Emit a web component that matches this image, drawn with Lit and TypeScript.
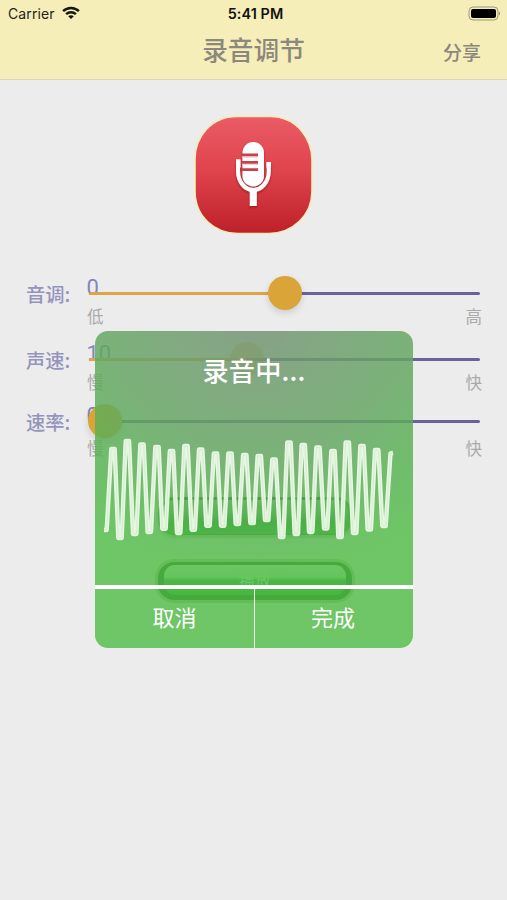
import { LitElement, html, svg, css } from "lit";
import { customElement, property } from "lit/decorators.js";

const WAVE: number[][] = [
  [104, 530], [106.7, 530],
  [113, 449], [120, 538], [127.4, 441], [134.7, 534], [142, 444.5], [149.3, 532], [157, 447],
  [164, 528.7], [171.5, 451], [178.7, 533], [186, 446], [193.3, 529.7], [200.7, 449.5],
  [208, 525.7], [215.5, 453.5], [222.7, 525.7], [230, 453.5], [237.3, 524], [244.8, 455],
  [252, 523], [259.3, 456], [266.7, 520], [274, 459.5], [281.7, 537], [289, 442.5],
  [296.3, 534], [303.3, 445], [310.7, 532], [318, 447.5], [325.7, 528.5], [333, 451],
  [340, 537], [347.3, 442.5], [354.7, 533], [362, 446], [369.3, 529.5], [376.7, 450],
  [384, 526], [390.5, 453.5], [393, 453],
];

function wavePath(): string {
  return WAVE.map(([x, y], i) => {
    if (i === 0) return `M${x} ${y}`;
    if (i === 1 || i >= WAVE.length - 2) return `L${x} ${y}`;
    return `L${x - 1.7} ${y}L${x + 1.7} ${y}`;
  }).join("");
}

@customElement("slider-row")
class SliderRow extends LitElement {
  @property() label = "";
  @property() value = "";
  @property() low = "";
  @property() high = "";
  @property({ type: Number }) knob = 0;
  @property({ type: Number }) fill = 0;

  static styles = css`
    :host { display: grid; grid-template-columns: 89px 391px; height: 66px; align-content: start; }
    .label { padding-left: 26px; font-size: 19.3px; line-height: 31px; height: 30px; box-sizing: border-box; color: #9494bd; font-weight: 500; white-space: nowrap; font-family: "Noto Sans CJK SC", sans-serif; }
    .slider { position: relative; height: 30px; }
    .value { position: absolute; left: -2.5px; top: -3px; font: 22px/24px Roboto, sans-serif; color: #8585b9; }
    .track { position: absolute; left: 0; right: 0; top: 13px; height: 3px; border-radius: 2px; background: #6a629f; }
    .fill { height: 100%; background: #dda548; border-radius: 2px; }
    .knob { position: absolute; top: -3px; width: 34px; height: 34px; border-radius: 50%; background: #dba439; box-shadow: 0 3px 7px #0002; opacity: var(--knob-opacity, 1); }
    .ends { grid-column: 2; display: flex; justify-content: space-between; margin: var(--ends-gap, -1px) -2px 0; font-size: 16.5px; line-height: 18px; color: #aaa; }
  `;

  render() {
    return html`
      <div class="label">${this.label}</div>
      <div class="slider">
        <div class="value">${this.value}</div>
        <div class="track"><div class="fill" style="width:${this.fill}px"></div></div>
        <div class="knob" style="left:${this.knob}px"></div>
      </div>
      <div class="ends"><span>${this.low}</span><span>${this.high}</span></div>
    `;
  }
}

@customElement("app-root")
class AppRoot extends LitElement {
  static styles = css`
    :host { display: block; position: relative; width: 507px; height: 900px; overflow: hidden; background: #ececec; font-family: "Liberation Sans", "Noto Sans CJK SC", sans-serif; }
    * { box-sizing: border-box; }
    header { height: 80px; background: #f5eeb9; border-bottom: 1px solid #d9d5b9; }
    .status { height: 27px; display: grid; grid-template-columns: 1fr auto 1fr; align-items: center; padding: 0 6px 0 8px; font: 14px/27px Inter, sans-serif; color: #24231b; }
    .carrier { display: flex; align-items: center; gap: 7px; letter-spacing: .1px; }
    .carrier svg { margin-top: -1px; }
    .time { font-weight: 600; font-size: 14.4px; letter-spacing: .1px; color: #111; padding-left: 2px; }
    .battery { justify-self: end; display: block; margin-top: -1px; }
    .nav { display: grid; grid-template-columns: 1fr auto 1fr; height: 48px; align-items: center; color: #8d877d; font-weight: 500; }
    .title { font-size: 25.7px; line-height: 48px; grid-column: 2; }
    .share { justify-self: end; padding: 1px 26px 0 0; font-size: 19px; }
    .mic { display: block; margin: 33px auto 0 191px; }
    .rows { margin-top: 42px; }
    .rows slider-row:nth-child(2) { height: 62px; --knob-opacity: .5; }
    .rows slider-row:nth-child(3) { --ends-gap: 3px; }
    .buttons { display: grid; justify-content: center; margin: 24px 0 0 3px; gap: 27px; }
    .pill { width: 194px; height: 38px; border-radius: 16px; text-align: center; font-size: 16px; line-height: 37px; }
    .flat { background: linear-gradient(#b4cdb4 0, #70b870 35%, #169021 62%, #20a52b 95%, #126012 100%); border-top: 3px dashed #0b450c; border-left: 4px solid #2d922f; border-right: 4px solid #2d922f; box-shadow: 0 3px 2px #b1bd94; }
    .play { background: #004a04; box-shadow: 0 0 0 3px #b1bd94; padding: 3px 6px 5px; }
    .shine { display: block; height: 30px; border-radius: 11px; line-height: 34px; color: #d2f3ce; background: linear-gradient(#e0f2e0 0, #b9dfba 40%, #1c9423 52%, #08a30c 100%); }
    .dialog { position: absolute; left: 95px; top: 331px; width: 318px; height: 317px; border-radius: 13px; overflow: hidden; color: #fff; display: flex; flex-direction: column; }
    .tint { position: absolute; inset: 0; opacity: .83; background: radial-gradient(ellipse 290px 255px at 51% -5%, #748f73 0, #6d9b6c 25%, #64a562 52%, #57b351 78%, #54be4a 100%); }
    .heading, .wave, .actions { position: relative; }
    .heading { height: 84px; text-align: center; font: 500 26.2px/78px "Noto Sans CJK SC", sans-serif; letter-spacing: .2px; }
    .wave { display: block; height: 170px; width: 318px; }
    .actions { display: grid; grid-template-columns: 160px 158px; height: 63px; border-top: 4px solid #fff; }
    .actions div { text-align: center; font-size: 22px; line-height: 60px; }
    .actions div:first-child { border-right: 1.5px solid #f1f9ef; }
    .actions div:last-child { padding-right: 2px; }
  `;

  render() {
    return html`
      <header>
        <div class="status">
          <div class="carrier"><span>Carrier</span>
            <svg width="18" height="14" viewBox="0 0 18 14" fill="none" stroke="#171711" stroke-width="2.5">
              <path d="M1.1 5.1C5.5 .8 12.5.8 16.9 5.1M4.1 8.2c2.8-2.6 7-2.6 9.8 0"/>
              <path d="M9 13 6.2 10.3c1.6-1.4 4-1.4 5.6 0Z" fill="#171711" stroke="none"/>
            </svg>
          </div>
          <div class="time">5:41 PM</div>
          <svg class="battery" width="33" height="15" viewBox="0 0 33 15">
            <rect x="1" y="1" width="29" height="13" rx="4" fill="none" stroke="#9c9979"/>
            <rect x="3" y="3" width="25" height="9" rx="2" fill="#000"/>
            <path d="M31 5.5q2 2 0 4Z" fill="#858269"/>
          </svg>
        </div>
        <div class="nav"><div class="title">录音调节</div><div class="share">分享</div></div>
      </header>

      <svg class="mic" width="125" height="124" viewBox="191 113 125 124">
        <defs>
          <linearGradient id="red" x1="0" y1="0" x2="0" y2="1">
            <stop offset="0" stop-color="#ea5c66"/><stop offset=".45" stop-color="#e0444d"/><stop offset="1" stop-color="#bd2029"/>
          </linearGradient>
          <filter id="drop" x="-30%" y="-30%" width="160%" height="160%"><feDropShadow dx="0" dy="1.5" stdDeviation="1" flood-color="#8c1018" flood-opacity=".65"/></filter>
        </defs>
        <path d="M237 116.5h33C297 116.5 312 139 312 160v31C312 216 292 233.5 269 233.5h-31C215 233.5 195 217 195 191v-32C195 137 211 116.5 237 116.5Z" fill="url(#red)" stroke="#f7edb7" stroke-width="1.6"/>
        <g filter="url(#drop)">
          <rect x="242.5" y="142" width="21.5" height="44.5" rx="10.7" fill="#fff"/>
          <path d="M238 159.5V171C238 182 245 190 253.3 190S268.8 182 268.8 171V162" fill="none" stroke="#fff" stroke-width="4"/>
          <path d="M253.3 189v17" stroke="#fff" stroke-width="7"/>
          <path d="M236 159.5h4.5v8H236ZM266.5 162h4.5v6h-4.5Z" fill="#fff"/>
        </g>
        <path d="M242 155h16M242 162.3h16M242 169.7h16" stroke="#c9404a" stroke-width="2.8"/>
        <path d="M242 157.2h16M242 164.5h16" stroke="#f3cdd0" stroke-width="1.2"/>
      </svg>

      <div class="rows">
        <slider-row label="音调:" value="0" low="低" high="高" knob="179" fill="190"></slider-row>
        <slider-row label="声速:" value="10" low="慢" high="快" knob="141" fill="158"></slider-row>
        <slider-row label="速率:" value="0" low="慢" high="快" knob="-1" fill="10"></slider-row>
      </div>
      <div class="buttons"><div class="pill flat"></div><div class="pill play"><span class="shine">播放</span></div></div>

      <div class="dialog">
        <div class="tint"></div>
        <div class="heading">录音中...</div>
        <svg class="wave" viewBox="95 415 318 170">
          ${svg`<path d=${wavePath()} fill="none" stroke="#edf9e9" stroke-opacity=".95" stroke-width="4.4" stroke-linejoin="round"/>
          <path d=${wavePath()} fill="none" stroke="#b9dfb3" stroke-opacity=".35" stroke-width="1.1" stroke-linejoin="round"/>`}
        </svg>
        <div class="actions"><div>取消</div><div>完成</div></div>
      </div>
    `;
  }
}
